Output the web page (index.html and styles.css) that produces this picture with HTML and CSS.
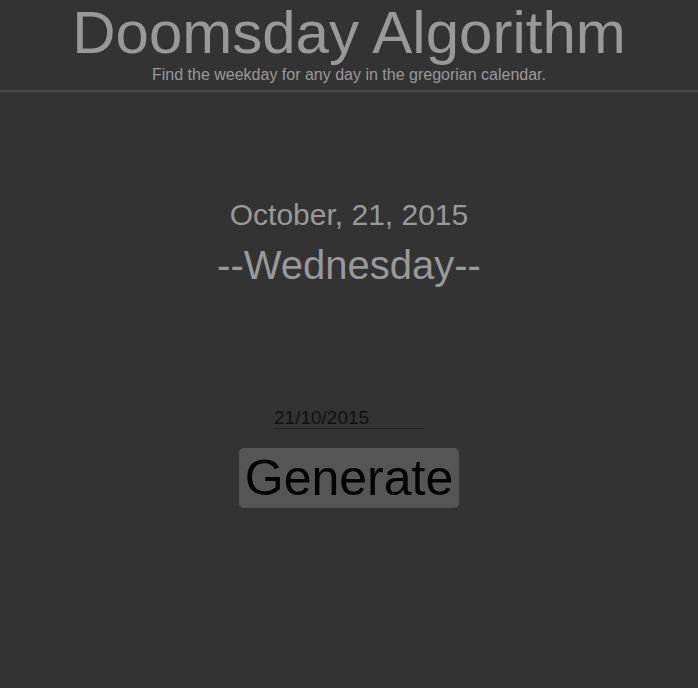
FILE: index.html
```html
<!DOCTYPE html>
<html>
<head>
<meta charset="utf-8">
<link rel="stylesheet" href="styles.css">
</head>
<body>
<header class="header">
  <h1 class="title">Doomsday Algorithm</h1>
  <p class="subtitle">Find the weekday for any day in the gregorian calendar.</p>
</header>
<main class="main">
  <div class="result">
    <div class="date">October, 21, 2015</div>
    <div class="weekday">--Wednesday--</div>
  </div>
  <form class="form">
    <input class="date-input" type="text" value="21/10/2015">
    <button class="generate" type="button">Generate</button>
  </form>
</main>
</body>
</html>
```
FILE: styles.css
```css
html, body {
  margin: 0;
  padding: 0;
  background: #333333;
  font-family: "Liberation Sans", Arial, sans-serif;
  color: #999999;
  height: 100%;
}
.header {
  text-align: center;
  border-bottom: 2px solid #4a4a4a;
  padding-bottom: 6px;
}
.title {
  margin: 0;
  font-size: 60px;
  font-weight: normal;
  line-height: 66px;
}
.subtitle {
  margin: 0;
  font-size: 16px;
  line-height: 18px;
}
.main {
  display: flex;
  flex-direction: column;
  align-items: center;
}
.result {
  margin-top: 100px;
  text-align: center;
}
.date {
  font-size: 30px;
  line-height: 45px;
}
.weekday {
  font-size: 40px;
  line-height: 56px;
}
.form {
  margin-top: 114px;
  display: flex;
  flex-direction: column;
  align-items: center;
}
.date-input {
  width: 150px;
  box-sizing: border-box;
  background: transparent;
  border: none;
  border-bottom: 1px solid #222;
  font-family: "Liberation Sans", Arial, sans-serif;
  font-size: 19px;
  color: #111;
  padding: 0;
  height: 22px;
  outline: none;
}
.generate {
  margin-top: 19px;
  background: #555555;
  border: none;
  border-radius: 5px;
  font-family: "Liberation Sans", Arial, sans-serif;
  font-size: 50px;
  color: #000;
  width: 220px;
  height: 60px;
  padding: 0;
}
```
